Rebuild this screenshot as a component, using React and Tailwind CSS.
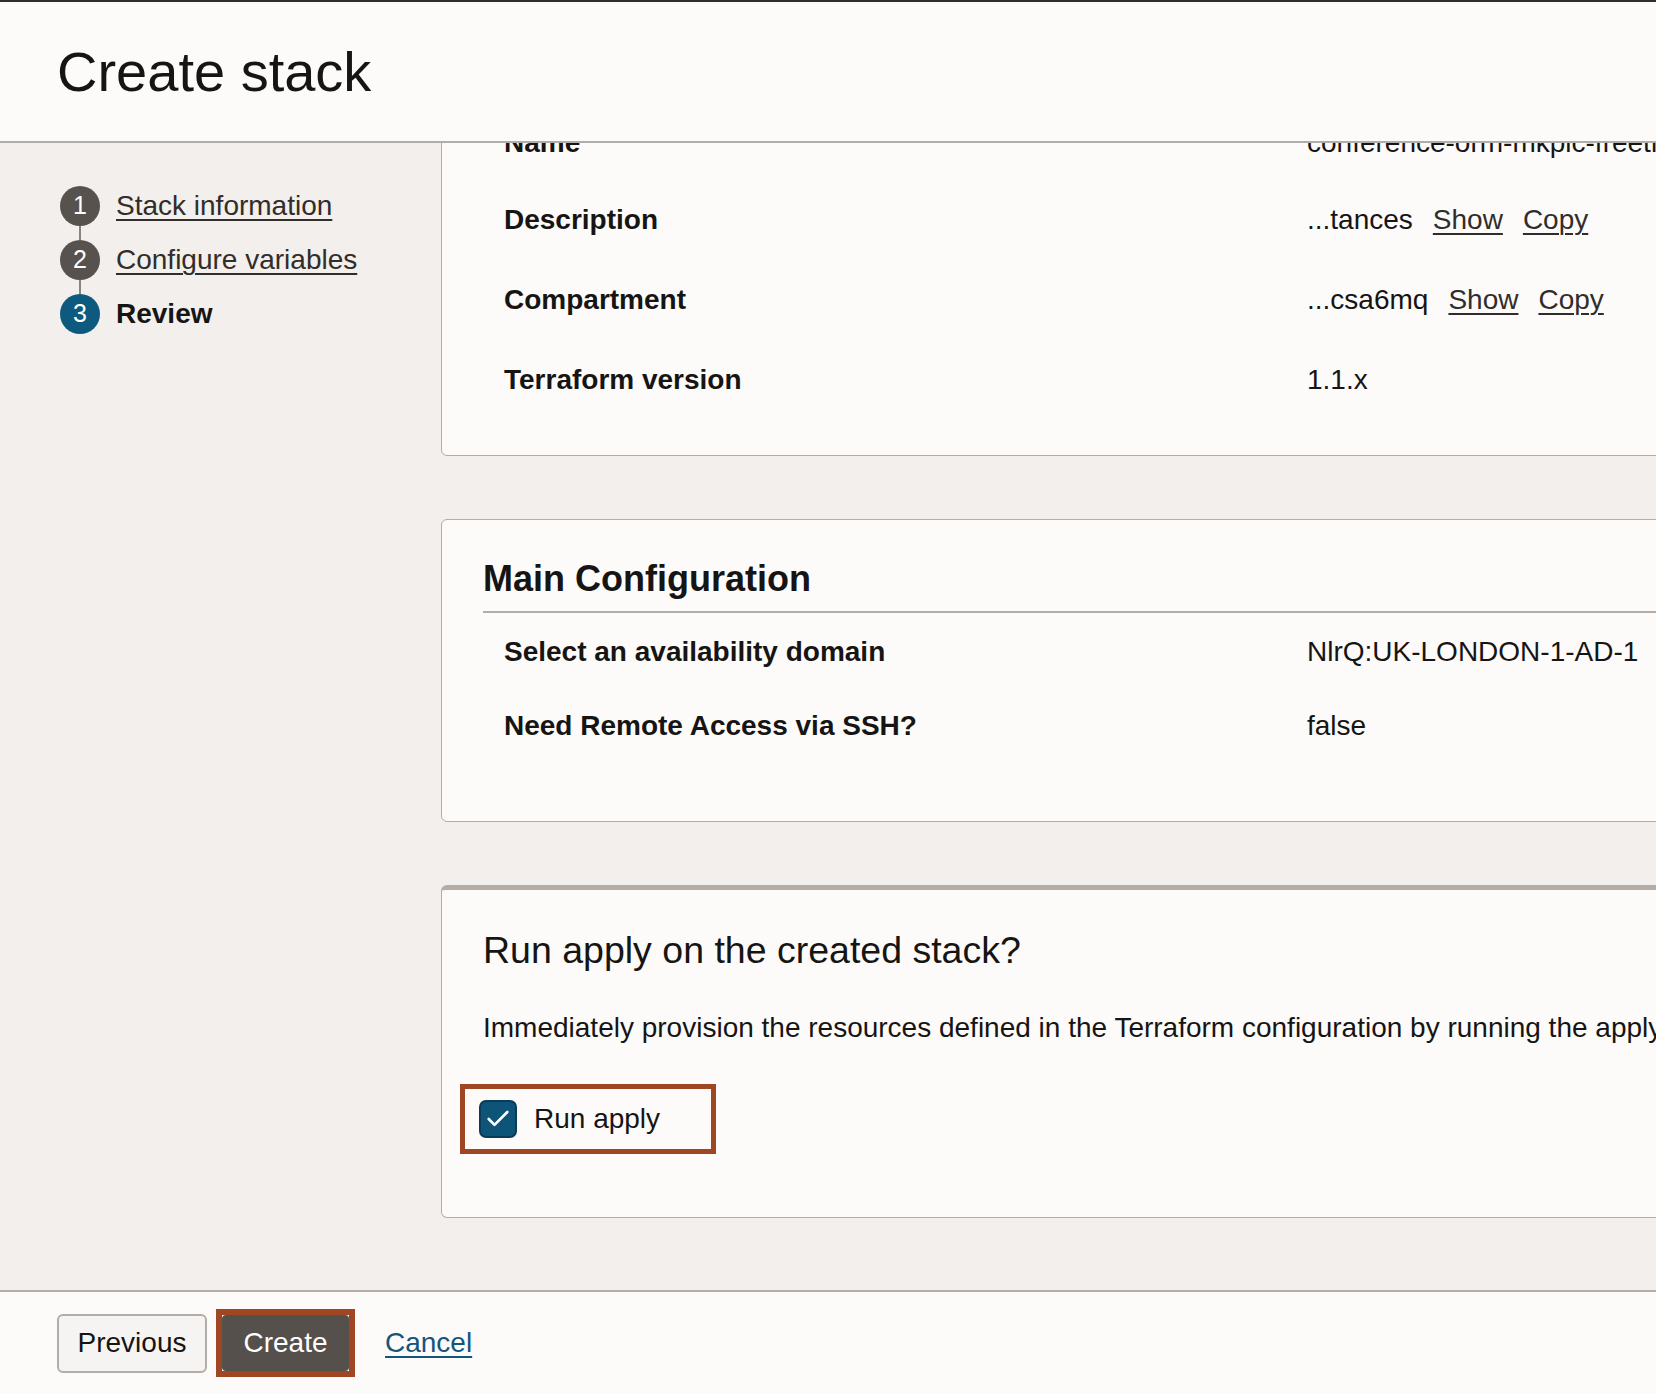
import { Check } from 'lucide-react';

const font = { fontFamily: '"Liberation Sans", Arial, sans-serif' };

const steps = [
  { n: 1, label: 'Stack information', done: true },
  { n: 2, label: 'Configure variables', done: true },
  { n: 3, label: 'Review', current: true },
];

const stackRows = [
  { label: 'Name', value: 'conference-orm-mkpic-freetier' },
  { label: 'Description', value: '...tances', links: true },
  { label: 'Compartment', value: '...csa6mq', links: true },
  { label: 'Terraform version', value: '1.1.x' },
];

const configRows = [
  { label: 'Select an availability domain', value: 'NlrQ:UK-LONDON-1-AD-1' },
  { label: 'Need Remote Access via SSH?', value: 'false' },
];

const Row = ({ row, height }) => (
  <div className={`grid grid-cols-[803px_1fr] items-center pl-[21px] ${height}`}>
    <div className="text-[28px] font-bold text-[#161513] whitespace-nowrap">{row.label}</div>
    <div className="flex items-center gap-5 text-[28px] text-[#161513] whitespace-nowrap">
      <span>{row.value}</span>
      {row.links && (
        <>
          <a className="text-[#312d2a] underline underline-offset-4 decoration-[1.5px]">Show</a>
          <a className="text-[#312d2a] underline underline-offset-4 decoration-[1.5px]">Copy</a>
        </>
      )}
    </div>
  </div>
);

export default function App() {
  return (
    <div style={font} className="w-screen h-screen overflow-hidden flex flex-col bg-[#f2efec] text-[#161513]">
      {/* page header */}
      <header className="h-[143px] shrink-0 flex items-center pl-[57px] bg-[#fcfbfa] border-t-2 border-t-[#312d2a] border-b-2 border-b-[#b4ada7]">
        <h1 className="text-[56px] leading-none text-[#161513]">Create stack</h1>
      </header>

      <div className="flex-1 flex min-h-0 overflow-hidden">
        {/* steps */}
        <aside className="w-[441px] shrink-0 pt-[43px] pl-[60px]">
          {steps.map((s, i) => (
            <div key={s.n}>
              {i > 0 && <div className="w-[2px] h-[14px] ml-[19px] bg-[#8a837e]"></div>}
              <div className="flex items-center gap-4 h-[40px]">
                <div
                  className={`w-[40px] h-[40px] rounded-full flex items-center justify-center text-[25px] text-white ${
                    s.current ? 'bg-[#0e5a7f]' : 'bg-[#58524e]'
                  }`}
                >
                  {s.n}
                </div>
                {s.current ? (
                  <span className="text-[28px] font-bold text-[#161513]">{s.label}</span>
                ) : (
                  <a className="text-[28px] text-[#312d2a] underline underline-offset-4 decoration-[1.5px]">{s.label}</a>
                )}
              </div>
            </div>
          ))}
        </aside>

        {/* review content, scrolled */}
        <main className="flex-1 min-w-0 overflow-hidden">
          <div className="-mt-[60px] w-[1300px]">
            <section className="bg-[#fcfbfa] border border-[#b4ada7] rounded-md pl-[41px] pt-[21px] pb-[35px]">
              {stackRows.map((r, i) => (
                <Row key={r.label} row={r} height={i === 0 ? 'h-[75px]' : 'h-[80px]'} />
              ))}
            </section>

            <section className="mt-[63px] bg-[#fcfbfa] border border-[#b4ada7] rounded-md pl-[41px] pt-[37px] pb-[58px]">
              <h2 className="text-[36px] leading-[1.2] font-bold pb-[11px] border-b-2 border-[#b4ada7]">Main Configuration</h2>
              <div className="mt-[2px]">
                {configRows.map((r) => (
                  <Row key={r.label} row={r} height="h-[74px]" />
                ))}
              </div>
            </section>

            <section className="mt-[63px] bg-[#fcfbfa] border border-[#b4ada7] border-t-[5px] rounded-md pl-[41px] pt-[38px] pb-[63px]">
              <h2 className="text-[37.5px] leading-[1.2]">Run apply on the created stack?</h2>
              <p className="mt-[38px] text-[28px] leading-[1.2] whitespace-nowrap">
                Immediately provision the resources defined in the Terraform configuration by running the apply action on the new stack.
              </p>
              <div className="mt-[39px] -ml-[23px] w-[256px] h-[70px] border-[5px] border-[#9f4722] flex items-center pl-[14px] gap-[17px]">
                <span className="w-[38px] h-[38px] rounded-[7px] bg-[#0d5478] border-2 border-[#0a3b57] flex items-center justify-center">
                  <Check size={28} strokeWidth={2.25} className="text-white" />
                </span>
                <span className="text-[28px]">Run apply</span>
              </div>
            </section>
          </div>
        </main>
      </div>

      {/* footer actions */}
      <footer className="h-[104px] shrink-0 flex items-center pl-[57px] bg-[#fcfbfa] border-t-2 border-[#b4ada7]">
        <button className="w-[150px] h-[59px] rounded-md border-2 border-[#b4ada7] bg-[#f5f4f2] text-[28px] text-[#161513]">
          Previous
        </button>
        <div className="ml-[9px] border-[6px] border-[#9f4722] bg-[#fcfbfa]">
          <button className="w-[127px] h-[56px] rounded-[4px] bg-[#55504c] text-[28px] text-white block">Create</button>
        </div>
        <a className="ml-[30px] text-[28px] text-[#14557c] underline underline-offset-4 decoration-[1.5px]">Cancel</a>
      </footer>
    </div>
  );
}
